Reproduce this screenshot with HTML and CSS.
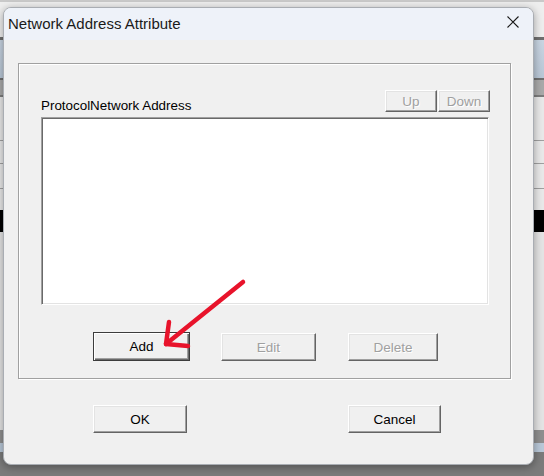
FILE: index.html
```html
<!DOCTYPE html>
<html>
<head>
<meta charset="utf-8">
<link rel="stylesheet" href="styles.css">
</head>
<body>
<div class="desktop">
  <div class="band b1"></div><div class="band b2"></div><div class="band b3"></div><div class="band b4"></div>
  <div class="band b5"></div><div class="band b6"></div><div class="band b7"></div><div class="band b8"></div>
  <div class="band row"></div><div class="band sep"></div><div class="band row"></div><div class="band sep"></div>
  <div class="band row2"></div><div class="band sep"></div>
  <div class="band row3"></div><div class="band black"></div><div class="band lower"></div><div class="band grey"></div>
  <div class="band blue"></div><div class="band rest"></div>
</div>

<div class="dialog">
  <div class="titlebar">
    <span class="title">Network Address Attribute</span>
    <svg class="close" width="12" height="12" viewBox="0 0 12 12"><path d="M0.5 0.5 L11.5 11.5 M11.5 0.5 L0.5 11.5" stroke="#1b1b1b" stroke-width="1.1" fill="none"/></svg>
  </div>
  <div class="content">
    <div class="group">
      <div class="group-head">
        <span class="label">ProtocolNetwork Address</span>
        <div class="updown">
          <button class="btn small" disabled>Up</button>
          <button class="btn small" disabled>Down</button>
        </div>
      </div>
      <div class="list"></div>
      <div class="actions">
        <button class="btn default add">Add</button>
        <button class="btn edit" disabled>Edit</button>
        <button class="btn delete" disabled>Delete</button>
      </div>
    </div>
    <div class="footer">
      <button class="btn ok">OK</button>
      <button class="btn cancel">Cancel</button>
    </div>
  </div>
</div>

<svg class="arrow" width="544" height="476" viewBox="0 0 544 476">
  <path d="M243 282 L166 344" stroke="#e8132b" stroke-width="4.5" stroke-linecap="round" fill="none"/>
  <path d="M169 322 L166 344 L188 346" stroke="#e8132b" stroke-width="4.5" stroke-linecap="round" stroke-linejoin="round" fill="none"/>
</svg>
</body>
</html>
```
FILE: styles.css
```css
html, body {
  margin: 0;
  padding: 0;
}
body {
  width: 544px;
  height: 476px;
  overflow: hidden;
  position: relative;
  font-family: "Liberation Sans", Arial, sans-serif;
  background: #7b7b7b;
}
.desktop {
  display: flex;
  flex-direction: column;
  width: 544px;
  height: 476px;
}
.band { flex: none; }
.b1 { height: 2px; background: #c9c9c9; }
.b2 { height: 35px; background: #eeeeee; }
.b3 { height: 3px; background: #6f6f6f; }
.b4 { height: 38px; background: linear-gradient(#c9d5e2, #b9c7d6); }
.b5 { height: 2px; background: #6f6f6f; }
.b6 { height: 15px; background: #a9a9a9; }
.b7 { height: 2px; background: #7d7d7d; }
.b8 { height: 21px; background: #e9e9e9; }
.row { height: 22px; background: #e9e9e9; }
.row2 { height: 24px; background: #e9e9e9; }
.row3 { height: 21px; background: #e9e9e9; }
.sep { height: 1px; background: #a0a0a0; }
.black { height: 22px; background: #000; }
.lower { height: 198px; background: #e4e4e4; }
.grey { height: 13px; background: #8f8f8f; }
.blue { height: 9px; background: #b9c8d8; }
.rest { flex: 1; background: #7b7b7b; }

.dialog {
  position: absolute;
  left: 3px;
  top: 7px;
  width: 531px;
  height: 458px;
  box-sizing: border-box;
  background: #f0f0f0;
  border: 1px solid #a9adb3;
  border-radius: 8px;
  overflow: hidden;
  box-shadow: 0 2px 8px rgba(0, 0, 0, 0.35);
  display: flex;
  flex-direction: column;
}
.titlebar {
  height: 32px;
  flex: none;
  background: #eef2f9;
  display: flex;
  align-items: flex-start;
  justify-content: space-between;
  padding: 0 14px 0 4px;
}
.title {
  font-size: 15px;
  line-height: 32px;
  color: #1a1a1a;
}
.close {
  margin-top: 8px;
}
.content {
  flex: 1;
  padding: 23px 0 0 14px;
  display: flex;
  flex-direction: column;
}
.group {
  width: 493px;
  height: 316px;
  box-sizing: border-box;
  border: 1px solid #a0a0a0;
  box-shadow: inset 1px 1px 0 #fff, 1px 1px 0 #fff;
  padding: 26px 21px 0 22px;
  display: flex;
  flex-direction: column;
}
.group-head {
  height: 22px;
  display: flex;
  justify-content: space-between;
  align-items: flex-end;
}
.label {
  font-size: 13.4px;
  line-height: 15px;
  color: #000;
  margin-bottom: -1px;
}
.updown {
  display: flex;
  gap: 1px;
  margin-right: -1px;
}
.btn {
  font-family: "Liberation Sans", Arial, sans-serif;
  font-size: 13.5px;
  color: #000;
  background: #f0f0f0;
  box-sizing: border-box;
  padding: 0;
  margin: 0;
  border: 1px solid;
  border-color: #ffffff #646464 #646464 #ffffff;
  box-shadow: inset -1px -1px 0 #a0a0a0, inset 1px 1px 0 #e3e3e3;
  border-radius: 0;
}
.btn:disabled {
  color: #a0a0a0;
  text-shadow: 1px 1px 0 #ffffff;
}
.small {
  width: 52px;
  height: 22px;
}
.list {
  margin-top: 5px;
  width: 448px;
  height: 188px;
  box-sizing: border-box;
  background: #fff;
  border: 1px solid;
  border-color: #a0a0a0 #ffffff #ffffff #a0a0a0;
  box-shadow: inset 1px 1px 0 #696969, inset -1px -1px 0 #e3e3e3;
}
.actions {
  margin-top: 27px;
  display: flex;
  align-items: flex-start;
}
.add {
  margin-left: 52px;
  width: 97px;
  height: 29px;
}
.default {
  border: 1px solid #3c3c3c;
  box-shadow: inset 1px 1px 0 #ffffff, inset -1px -1px 0 #696969, inset -2px -2px 0 #a0a0a0;
}
.edit {
  margin-left: 31px;
  margin-top: 1px;
  width: 95px;
  height: 28px;
}
.delete {
  margin-left: 32px;
  margin-top: 1px;
  width: 90px;
  height: 28px;
}
.footer {
  margin-top: 26px;
  display: flex;
}
.ok {
  margin-left: 75px;
  width: 94px;
  height: 28px;
}
.cancel {
  margin-left: 161px;
  width: 93px;
  height: 28px;
}
.arrow {
  position: absolute;
  left: 0;
  top: 0;
  pointer-events: none;
}
```
